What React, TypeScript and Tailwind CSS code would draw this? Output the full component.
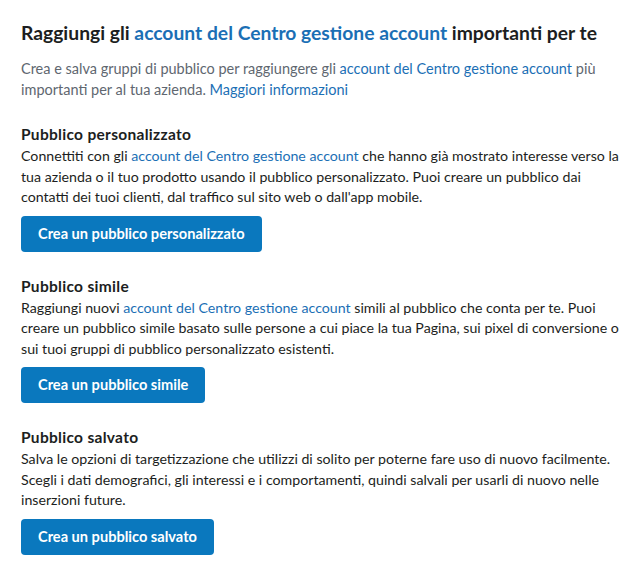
import React from "react";

const L = ({ children }: { children: React.ReactNode }) => (
  <span className="text-[#1b6fb5]">{children}</span>
);

function Section({
  title,
  body,
  button,
}: {
  title: string;
  body: React.ReactNode;
  button: string;
}) {
  return (
    <div className="flex flex-col items-start">
      <div className="text-[15.5px] leading-[24px] font-bold tracking-[0.3px] text-[#1c1e21]">{title}</div>
      <p className="text-[14.2px] leading-[20.5px] text-[#1c1e21] whitespace-nowrap">{body}</p>
      <button className="mt-[8px] h-[36px] px-[17px] rounded-[4px] bg-[#0a78be] text-white text-[14.6px] font-bold">
        {button}
      </button>
    </div>
  );
}

export default function App() {
  return (
    <div
      className="w-[622px] h-[563px] bg-white pl-[21px] pt-[21px] flex flex-col"
      style={{ fontFamily: 'Lato, "Noto Sans", sans-serif' }}
    >
      <h1 className="text-[19.3px] leading-[24px] font-bold text-[#1c1e21] whitespace-nowrap">
        Raggiungi gli <L>account del Centro gestione account</L> importanti per te
      </h1>
      <p className="mt-[13px] text-[14.5px] leading-[21px] text-[#606770] whitespace-nowrap">
        Crea e salva gruppi di pubblico per raggiungere gli <L>account del Centro gestione account</L> più
        <br />
        importanti per al tua azienda. <L>Maggiori informazioni</L>
      </p>
      <div className="mt-[22px] flex flex-col gap-[22px]">
        <Section
          title="Pubblico personalizzato"
          body={
            <>
              Connettiti con gli <L>account del Centro gestione account</L> che hanno già mostrato interesse verso la
              <br />
              tua azienda o il tuo prodotto usando il pubblico personalizzato. Puoi creare un pubblico dai
              <br />
              contatti dei tuoi clienti, dal traffico sul sito web o dall'app mobile.
            </>
          }
          button="Crea un pubblico personalizzato"
        />
        <Section
          title="Pubblico simile"
          body={
            <>
              Raggiungi nuovi <L>account del Centro gestione account</L> simili al pubblico che conta per te. Puoi
              <br />
              creare un pubblico simile basato sulle persone a cui piace la tua Pagina, sui pixel di conversione o
              <br />
              sui tuoi gruppi di pubblico personalizzato esistenti.
            </>
          }
          button="Crea un pubblico simile"
        />
        <Section
          title="Pubblico salvato"
          body={
            <>
              Salva le opzioni di targetizzazione che utilizzi di solito per poterne fare uso di nuovo facilmente.
              <br />
              Scegli i dati demografici, gli interessi e i comportamenti, quindi salvali per usarli di nuovo nelle
              <br />
              inserzioni future.
            </>
          }
          button="Crea un pubblico salvato"
        />
      </div>
    </div>
  );
}
